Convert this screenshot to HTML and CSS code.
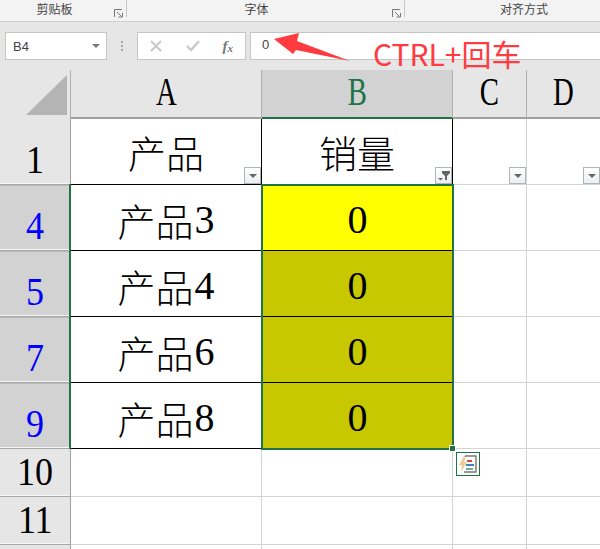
FILE: index.html
```html
<!DOCTYPE html>
<html lang="zh-CN">
<head>
<meta charset="utf-8">
<title>Excel</title>
<link rel="stylesheet" href="styles.css">
</head>
<body>
<div class="app">
  <div class="ribbon">
    <div class="group g1"><span>剪贴板</span>
      <svg class="launcher" width="9" height="9" viewBox="0 0 9 9"><path d="M0.5 8V0.5H8M3 3L7.5 7.5M4.5 8H8.5V4" fill="none" stroke="#777" stroke-width="1"/></svg>
    </div>
    <div class="group g2"><span>字体</span>
      <svg class="launcher" width="9" height="9" viewBox="0 0 9 9"><path d="M0.5 8V0.5H8M3 3L7.5 7.5M4.5 8H8.5V4" fill="none" stroke="#777" stroke-width="1"/></svg>
    </div>
    <div class="group g3"><span>对齐方式</span></div>
  </div>
  <div class="formula">
    <div class="namebox"><span>B4</span><i class="caret"></i></div>
    <div class="dots"><i></i><i></i><i></i></div>
    <div class="fbtns">
      <svg width="14" height="14" viewBox="0 0 14 14"><path d="M2 2L12 12M12 2L2 12" stroke="#c9c9c9" stroke-width="2"/></svg>
      <svg width="16" height="14" viewBox="0 0 16 14"><path d="M2 7L6 11L14 2" fill="none" stroke="#c9c9c9" stroke-width="2.4"/></svg>
      <span class="fx">f<sub>x</sub></span>
    </div>
    <div class="finput">0</div>
  </div>
  <div class="sheet">
    <div class="corner"><svg width="70" height="48" viewBox="0 0 70 48"><path d="M26 45L67 5V45Z" fill="#b4b4b4"/></svg></div>
    <div class="ch"><span class="letter">A</span></div>
    <div class="ch on"><span class="letter">B</span></div>
    <div class="ch"><span class="letter">C</span></div>
    <div class="ch"><span class="letter">D</span></div>

    <div class="rh"><span class="num">1</span></div>
    <div class="c title">产品<b class="fb"><i></i></b></div>
    <div class="c title black-r">销量<b class="fb filt"><svg width="15" height="15" viewBox="0 0 15 15"><path d="M6 3H14V5L11 8V12H9V8L6 5Z" fill="#666"/><path d="M2 10H7L4.5 12.5Z" fill="#666"/></svg></b></div>
    <div class="c plain"><b class="fb"><i></i></b></div>
    <div class="c plain"><b class="fb"><i></i></b></div>

    <div class="rh sel"><span class="num">4</span></div>
    <div class="c data">产品<em>3</em></div>
    <div class="c data y"><em>0</em></div>
    <div class="c plain"></div>
    <div class="c plain"></div>

    <div class="rh sel"><span class="num">5</span></div>
    <div class="c data">产品<em>4</em></div>
    <div class="c data o"><em>0</em></div>
    <div class="c plain"></div>
    <div class="c plain"></div>

    <div class="rh sel"><span class="num">7</span></div>
    <div class="c data">产品<em>6</em></div>
    <div class="c data o"><em>0</em></div>
    <div class="c plain"></div>
    <div class="c plain"></div>

    <div class="rh sel"><span class="num">9</span></div>
    <div class="c data">产品<em>8</em></div>
    <div class="c data o"><em>0</em></div>
    <div class="c plain"></div>
    <div class="c plain"></div>

    <div class="rh"><span class="num">10</span></div>
    <div class="c plain"></div><div class="c plain"></div><div class="c plain"></div><div class="c plain"></div>

    <div class="rh"><span class="num">11</span></div>
    <div class="c plain"></div><div class="c plain"></div><div class="c plain"></div><div class="c plain"></div>

    <div class="rh"></div>
    <div class="c plain"></div><div class="c plain"></div><div class="c plain"></div><div class="c plain"></div>
  </div>

  <div class="selbox"><i class="handle"></i></div>
  <div class="hdrline"></div>
  <div class="smart">
    <svg width="20" height="20" viewBox="0 0 20 20">
      <path d="M6 2L1 11H4L3 18L9 8H6L8 2Z" fill="#eccb96"/>
      <path d="M7 2H18V18H6" fill="none" stroke="#777" stroke-width="1.4"/>
      <rect x="9" y="6" width="5" height="2" fill="#d2492a"/>
      <rect x="8" y="10" width="8" height="2" fill="#3f80c0"/>
      <rect x="8" y="14" width="7" height="2" fill="#6fb09a"/>
    </svg>
  </div>
  <svg class="arrow" width="90" height="40" viewBox="0 0 90 40"><path d="M4 9L29 3L27 11L80 31L26 20L23 24Z" fill="#ff3b3f"/></svg>
  <div class="note">CTRL+回车</div>
</div>
</body>
</html>
```
FILE: styles.css
```css
* { box-sizing: border-box; }
html, body { margin: 0; padding: 0; }
body { width: 600px; height: 549px; overflow: hidden; background: #fff; }
.app { position: relative; width: 600px; height: 549px; overflow: hidden; font-family: "Liberation Sans", "Noto Sans CJK SC", sans-serif; }

.ribbon { display: flex; height: 22px; background: #f3f3f3; border-bottom: 1px solid #cfcfcf; font-size: 12px; color: #444; }
.group { position: relative; display: flex; align-items: flex-start; justify-content: center; height: 17px; line-height: 21px; border-right: 1px solid #c8c8c8; }
.g1 { width: 127px; padding-right: 17px; }
.g2 { width: 278px; padding-right: 18px; }
.g3 { flex: 1; border-right: 0; padding-right: 0; padding-left: 43px; }
.launcher { position: absolute; right: 3px; top: 9px; }

.formula { display: flex; align-items: flex-start; height: 48px; padding: 10px 0 0 5px; background: #e6e6e6; }
.namebox { display: flex; align-items: center; justify-content: space-between; width: 102px; height: 28px; padding: 0 6px 0 7px; background: #fff; border: 1px solid #c6c6c6; font-size: 13px; color: #444; }
.caret { width: 0; height: 0; border-left: 4px solid transparent; border-right: 4px solid transparent; border-top: 4px solid #777; }
.dots { display: flex; flex-direction: column; gap: 2px; width: 31px; padding: 9px 0 0 14px; }
.dots i { width: 2px; height: 2px; background: #a8a8a8; }
.fbtns { display: flex; align-items: center; justify-content: space-between; width: 109px; height: 28px; padding: 0 12px 0 11px; margin-left: -1px; background: #fff; border: 1px solid #c6c6c6; }
.fx { font: italic bold 15px "Liberation Serif", serif; color: #777; }
.fx sub { font-size: 11px; vertical-align: -1px; line-height: 0; }
.finput { flex: 1; height: 28px; margin-left: 4px; padding-left: 11px; line-height: 24px; background: #fff; border: 1px solid #c6c6c6; border-right: 0; font-size: 13px; color: #444; }

.sheet { display: grid; grid-template-columns: 71px 191px 191px 74px 74px; grid-template-rows: 49px 66px 66px 66px 66px 66px 48px 48px 10px; font-family: "Liberation Serif", "Noto Sans CJK SC", serif; color: #000; }
.corner { background: #e6e6e6; border-right: 1px solid #b0b0b0; }
.corner svg { display: block; }
.ch { display: flex; justify-content: center; align-items: flex-end; padding-bottom: 2px; background: #e6e6e6; border-right: 1px solid #b0b0b0; border-bottom: 2px solid #a0a0a0; }
.ch.on { background: #d2d2d2; color: #217346; border-bottom-color: #217346; }
.letter { display: block; font-size: 40px; line-height: 46px; transform: scaleX(.72); }
.rh { display: flex; justify-content: center; align-items: flex-end; padding-bottom: 1px; background: #e6e6e6; border-right: 1px solid #a0a0a0; border-bottom: 1px solid #a8a8a8; box-shadow: inset 0 -1px #f6f6f6; }
.rh.sel { background: #d2d2d2; color: #00f; border-top: 1px solid #b8b8b8; }
.num { display: block; font-size: 40px; line-height: 46px; transform: scaleX(.9); }

.c { position: relative; display: flex; align-items: center; justify-content: center; border-right: 1px solid #d4d4d4; border-bottom: 1px solid #d4d4d4; font-weight: 300; }
.title { font-size: 38px; border-right-color: #000; border-bottom-color: #000; }
.data { padding-top: 4px; font-size: 38px; border-right-color: #000; border-bottom-color: #000; }
.data em { margin-left: 1px; font-style: normal; font-weight: 400; font-size: 40px; }
.y { background: #ff0; }
.o { background: #c8c800; }

.fb { position: absolute; right: 0; bottom: 0; display: flex; align-items: center; justify-content: center; width: 17px; height: 17px; background: linear-gradient(#fff, #eceef2); border: 1px solid #b0b3b8; }
.fb i { width: 0; height: 0; border-left: 4px solid transparent; border-right: 4px solid transparent; border-top: 4px solid #666; }
.filt svg { display: block; }

.selbox { position: absolute; left: 261px; top: 184px; width: 193px; height: 266px; border: 2px solid #217346; }
.handle { position: absolute; right: -4px; bottom: -4px; width: 7px; height: 7px; background: #217346; border: 1px solid #fff; }
.hdrline { position: absolute; left: 69px; top: 184px; width: 2px; height: 265px; background: #217346; }
.smart { position: absolute; left: 456px; top: 452px; display: flex; align-items: center; justify-content: center; width: 24px; height: 24px; background: #fff; border: 1px solid #217346; }
.arrow { position: absolute; left: 270px; top: 30px; }
.note { position: absolute; left: 373px; top: 39px; font: 30px/28px "Noto Sans CJK SC", "Liberation Sans", sans-serif; color: #ff3b3f; }
```
